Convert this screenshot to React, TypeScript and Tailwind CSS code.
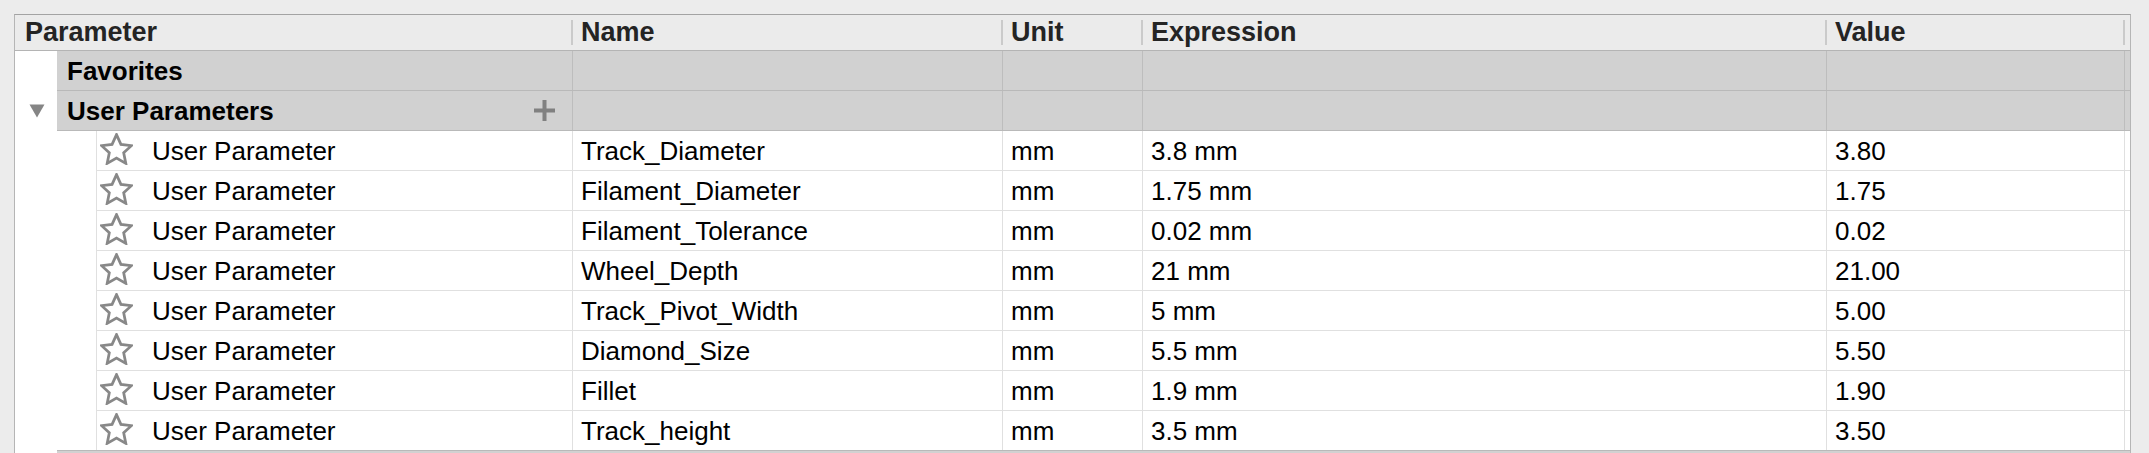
import React from 'react'

interface Param {
  name: string
  unit: string
  expression: string
  value: string
}

const params: Param[] = [
  { name: 'Track_Diameter', unit: 'mm', expression: '3.8 mm', value: '3.80' },
  { name: 'Filament_Diameter', unit: 'mm', expression: '1.75 mm', value: '1.75' },
  { name: 'Filament_Tolerance', unit: 'mm', expression: '0.02 mm', value: '0.02' },
  { name: 'Wheel_Depth', unit: 'mm', expression: '21 mm', value: '21.00' },
  { name: 'Track_Pivot_Width', unit: 'mm', expression: '5 mm', value: '5.00' },
  { name: 'Diamond_Size', unit: 'mm', expression: '5.5 mm', value: '5.50' },
  { name: 'Fillet', unit: 'mm', expression: '1.9 mm', value: '1.90' },
  { name: 'Track_height', unit: 'mm', expression: '3.5 mm', value: '3.50' },
]

const font = { fontFamily: '"Liberation Sans", Arial, Helvetica, sans-serif' }

const StarIcon = () => (
  <svg width="33" height="32" viewBox="1.2 1.2 21.6 20.8" className="shrink-0 -mt-[3px]">
    <polygon
      points="12,2.2 14.9,8.6 21.8,9.4 16.7,14.1 18.1,21 12,17.5 5.9,21 7.3,14.1 2.2,9.4 9.1,8.6"
      fill="none"
      stroke="#888888"
      strokeWidth="1.8"
      strokeLinejoin="miter"
    />
  </svg>
)

const HeaderCell = ({ label, width }: { label: string; width: string }) => (
  <div className={`${width} h-full flex items-center justify-between pl-[8px]`}>
    <span className="text-[27px] font-bold text-[#242424] leading-none">{label}</span>
    <div className="w-[2px] h-[25px] bg-[#cacaca]" />
  </div>
)

const GroupRow = ({ label, expanded, showPlus }: { label: string; expanded?: boolean; showPlus?: boolean }) => (
  <div className="flex h-[40px]">
    <div className="w-[42px] h-full bg-white flex items-center pl-[14px]">
      {expanded && (
        <svg width="16" height="14" viewBox="0 0 16 14">
          <polygon points="0.5,0.5 15.5,0.5 8,13.5" fill="#858585" />
        </svg>
      )}
    </div>
    <div className="flex flex-1 h-full bg-[#d1d1d1] border-b border-[#b9b9b9]">
      <div className="w-[516px] h-full flex items-center justify-between pl-[10px] pr-[17px] border-r border-[#bdbdbd]">
        <span className="text-[26px] font-bold text-black leading-none">{label}</span>
        {showPlus && (
          <svg width="21" height="21" viewBox="0 0 21 21">
            <rect x="0" y="8.5" width="21" height="4" fill="#808080" />
            <rect x="8.5" y="0" width="4" height="21" fill="#808080" />
          </svg>
        )}
      </div>
      <div className="w-[430px] h-full border-r border-[#bdbdbd]" />
      <div className="w-[140px] h-full border-r border-[#bdbdbd]" />
      <div className="w-[684px] h-full border-r border-[#bdbdbd]" />
      <div className="w-[298px] h-full border-r border-[#bdbdbd]" />
      <div className="flex-1" />
    </div>
  </div>
)

const ParamRow = ({ p, last }: { p: Param; last?: boolean }) => (
  <div className={`flex ${last ? 'h-[39px]' : 'h-[40px]'}`}>
    <div className="w-[81px] h-full bg-white" />
    <div className={`flex flex-1 h-full bg-white border-l border-[#e0e0e0] ${last ? '' : 'border-b'}`}>
      <div className="w-[476px] h-full flex items-center pl-[3px] border-r border-[#e0e0e0]">
        <StarIcon />
        <span className="ml-[19px] text-[26px] text-black leading-none">User Parameter</span>
      </div>
      <div className="w-[430px] h-full flex items-center pl-[8px] border-r border-[#e0e0e0]">
        <span className="text-[26px] text-black leading-none">{p.name}</span>
      </div>
      <div className="w-[140px] h-full flex items-center pl-[8px] border-r border-[#e0e0e0]">
        <span className="text-[26px] text-black leading-none">{p.unit}</span>
      </div>
      <div className="w-[684px] h-full flex items-center pl-[8px] border-r border-[#e0e0e0]">
        <span className="text-[26px] text-black leading-none">{p.expression}</span>
      </div>
      <div className="w-[298px] h-full flex items-center pl-[8px] border-r border-[#e0e0e0]">
        <span className="text-[26px] text-black leading-none">{p.value}</span>
      </div>
      <div className="flex-1" />
    </div>
  </div>
)

export default function App() {
  return (
    <div className="w-[2149px] h-[453px] overflow-hidden bg-[#ececec] pt-[14px] pl-[14px]" style={font}>
      <div className="w-[2117px] h-[460px] bg-white border-t border-l border-r border-t-[#a3a3a3] border-l-[#b5b5b5] border-r-[#b5b5b5]">
        <div className="flex h-[36px] bg-[#ebebeb] border-b border-[#b4b4b4]">
          <div className="w-[558px] h-full flex items-center justify-between pl-[10px]">
            <span className="text-[27px] font-bold text-[#242424] leading-none">Parameter</span>
            <div className="w-[2px] h-[25px] bg-[#cacaca]" />
          </div>
          <HeaderCell label="Name" width="w-[430px]" />
          <HeaderCell label="Unit" width="w-[140px]" />
          <HeaderCell label="Expression" width="w-[684px]" />
          <HeaderCell label="Value" width="w-[298px]" />
          <div className="flex-1" />
        </div>
        <GroupRow label="Favorites" />
        <GroupRow label="User Parameters" expanded showPlus />
        {params.map((p, i) => (
          <ParamRow key={p.name} p={p} last={i === params.length - 1} />
        ))}
        <div className="flex h-[40px]">
          <div className="w-[42px] h-full bg-white" />
          <div className="flex-1 h-full bg-[#d1d1d1] border-t border-[#b9b9b9]" />
        </div>
      </div>
    </div>
  )
}
